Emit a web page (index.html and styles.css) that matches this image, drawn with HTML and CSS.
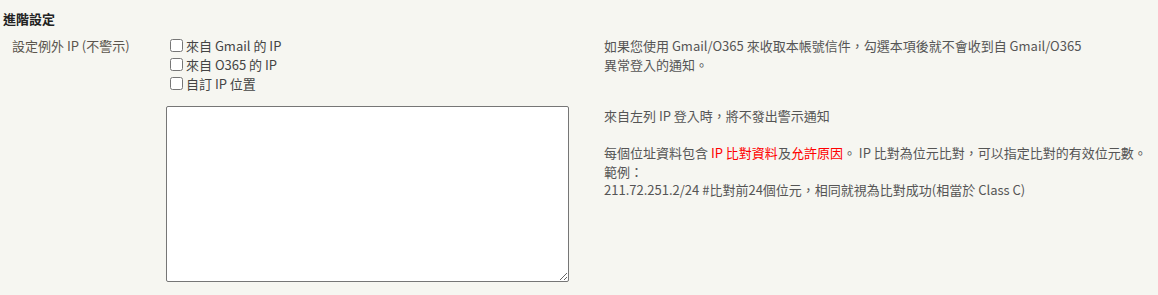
FILE: index.html
```html
<!DOCTYPE html>
<html lang="zh-Hant">
<head>
  <meta charset="UTF-8">
  <title>進階設定</title>
  <link rel="stylesheet" href="styles.css">
</head>
<body>
  <div class="section-title">進階設定</div>

  <div class="setting-grid">
    <div class="label">設定例外 IP (不警示)</div>

    <div class="options">
      <label class="opt"><input type="checkbox">來自 Gmail 的 IP</label>
      <label class="opt"><input type="checkbox">來自 O365 的 IP</label>
      <label class="opt"><input type="checkbox">自訂 IP 位置</label>
    </div>

    <div class="desc">
      如果您使用 Gmail/O365 來收取本帳號信件，勾選本項後就不會收到自 Gmail/O365<br>
      異常登入的通知。
    </div>

    <div></div>

    <textarea class="ip-list"></textarea>

    <div class="desc">
      來自左列 IP 登入時，將不發出警示通知
      <br><br>
      每個位址資料包含 <span class="red">IP 比對資料</span>及<span class="red">允許原因</span>。 IP 比對為位元比對，可以指定比對的有效位元數。<br>
      範例：<br>
      211.72.251.2/24 #比對前24個位元，相同就視為比對成功(相當於 Class C)
    </div>
  </div>
</body>
</html>
```

FILE: styles.css
```css
body {
  margin: 0;
  padding: 10px 3px;
  background: #f6f6f1;
  font-family: "Noto Sans CJK TC", sans-serif;
  font-size: 13px;
  color: #555;
}
.section-title { font-weight: bold; color: #222; line-height: 18px; }

.setting-grid {
  display: grid;
  grid-template-columns: 163px 438px 1fr;
  row-gap: 13px;
  margin-top: 8px;
}
.label { padding-left: 9px; color: #5b554d; line-height: 18px; padding-top: 1px; }
.options { display: flex; flex-direction: column; }
.opt { display: flex; align-items: center; height: 19px; color: #444; }
.opt input { margin: 3px 3px 3px 4px; width: 13px; height: 13px; }
.desc { line-height: 18.5px; white-space: nowrap; padding-top: 1px; color: #555; }
.red { color: #f00; }
.ip-list {
  width: 403px; height: 176px;
  box-sizing: border-box;
  margin: 0;
  border: 1px solid #767676;
  border-radius: 2px;
  background: #fff;
  resize: both;
}
```
